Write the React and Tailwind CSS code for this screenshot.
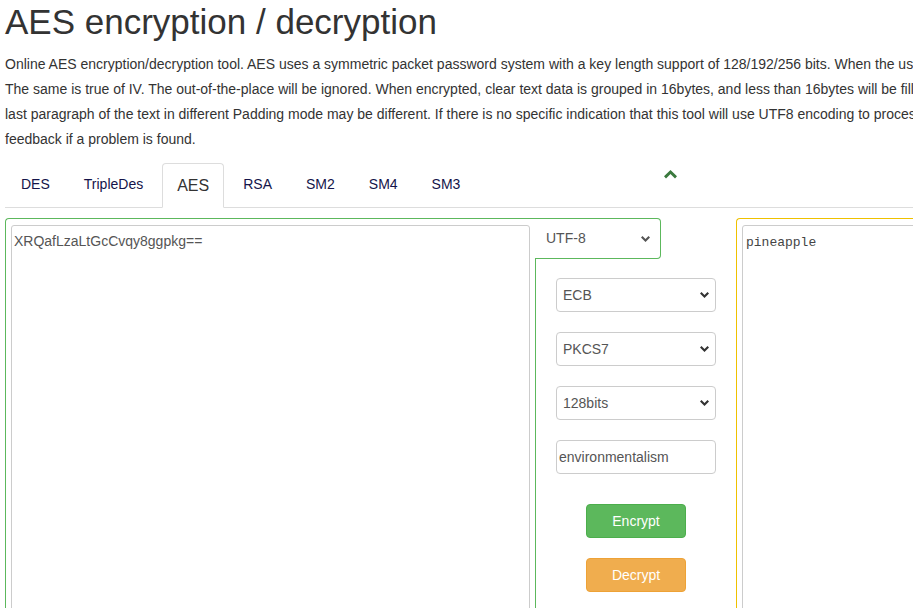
import React from 'react';

const tabs = ['DES', 'TripleDes', 'AES', 'RSA', 'SM2', 'SM4', 'SM3'];

const Chevron = ({ color = '#333' }) => (
    <svg width="9" height="6" viewBox="0 0 9 6" className="block">
        <polygon points="0,1.6 1.5,0.1 4.5,3 7.5,0.1 9,1.6 4.5,6" fill={color} />
    </svg>
);

const SelectBox = ({ value }) => (
    <div className="w-[160px] h-[34px] border border-[#ccc] rounded-[4px] flex items-center justify-between pl-[6px] pr-[6px] mb-[20px] text-[14px] text-[#555]">
        <span>{value}</span>
        <Chevron color="#333" />
    </div>
);

const App = () => {
    return (
        <div className="w-[913px] h-[608px] overflow-hidden bg-white text-[#333] font-['Liberation_Sans',Arial,sans-serif]">
            <div className="w-[1400px] px-[5px]">
                {/* Title + intro */}
                <h1 className="mt-[2px] text-[35px] leading-[40px] font-normal">AES encryption / decryption</h1>
                <div className="mt-[10px] text-[14px] leading-[25px] whitespace-nowrap">
                    <p>Online AES encryption/decryption tool. AES uses a symmetric packet password system with a key length support of 128/192/256 bits. When the user's key length is insufficient, it will be filled automatically.</p>
                    <p>The same is true of IV. The out-of-the-place will be ignored. When encrypted, clear text data is grouped in 16bytes, and less than 16bytes will be filled, so the result of the</p>
                    <p>last paragraph of the text in different Padding mode may be different. If there is no specific indication that this tool will use UTF8 encoding to process the data, please</p>
                    <p>feedback if a problem is found.</p>
                </div>

                {/* Tabs */}
                <ul className="relative mt-[11px] pl-[1px] flex border-b border-[#ddd]">
                    {tabs.map((t) =>
                        t === 'AES' ? (
                            <li key={t} className="-mb-px mr-[4px] h-[45px] px-[14px] flex items-center bg-white border border-[#ddd] border-b-white rounded-t-[4px] text-[16px] text-[#333]">
                                {t}
                            </li>
                        ) : (
                            <li key={t} className="-mb-px mr-[4px] h-[45px] px-[15px] pb-[2px] flex items-center text-[14px] text-[#14144a]">
                                {t}
                            </li>
                        )
                    )}
                    <svg width="13" height="9" viewBox="0 0 13 9" className="absolute left-[659px] top-[7px]">
                        <polygon points="6.5,0 13,6.3 11,8.4 6.5,4 2,8.4 0,6.3" fill="#3b7a3e" />
                    </svg>
                </ul>

                {/* Panels */}
                <div className="mt-[10px] flex items-stretch">
                    <div className="w-[530px] border-l border-t border-[#5cb85c] rounded-tl-[4px] pl-[5px] pr-[5px] pt-[6px]">
                        <textarea
                            readOnly
                            defaultValue="XRQafLzaLtGcCvqy8ggpkg=="
                            className="block w-[519px] h-[420px] resize-none outline-none border border-[#ccc] rounded-[3px] px-[2px] pt-[5px] text-[14px] leading-[20px] text-[#555] font-['Liberation_Sans',Arial,sans-serif]"
                        />
                    </div>

                    <div className="w-[201px] flex flex-col">
                        <div className="w-[126px] h-[41px] border-t border-r border-b border-[#5cb85c] rounded-r-[4px] flex items-center justify-between pl-[11px] pr-[10px] text-[14px] text-[#555]">
                            <span>UTF-8</span>
                            <Chevron color="#555" />
                        </div>
                        <div className="flex-1 border-l border-[#5cb85c] pl-[20px] pt-[19px]">
                            <SelectBox value="ECB" />
                            <SelectBox value="PKCS7" />
                            <SelectBox value="128bits" />
                            <div className="w-[160px] h-[34px] border border-[#ccc] rounded-[4px] flex items-center pl-[2px] text-[14px] text-[#555]">
                                environmentalism
                            </div>
                            <button className="block mt-[30px] ml-[30px] w-[100px] h-[34px] rounded-[4px] bg-[#5cb85c] border border-[#4cae4c] text-white text-[14px]">
                                Encrypt
                            </button>
                            <button className="block mt-[20px] ml-[30px] w-[100px] h-[34px] rounded-[4px] bg-[#f0ad4e] border border-[#eea236] text-white text-[14px]">
                                Decrypt
                            </button>
                        </div>
                    </div>

                    <div className="w-[600px] border-l border-t border-[#efc100] rounded-tl-[4px] pl-[5px] pt-[6px]">
                        <textarea
                            readOnly
                            defaultValue="pineapple"
                            className="block w-[580px] h-[420px] resize-none outline-none border border-[#ccc] rounded-[3px] px-[3px] pt-[7px] text-[13px] leading-[20px] text-[#444] font-['Liberation_Mono','Courier_New',monospace]"
                        />
                    </div>
                </div>
            </div>
        </div>
    );
};

export default App;
